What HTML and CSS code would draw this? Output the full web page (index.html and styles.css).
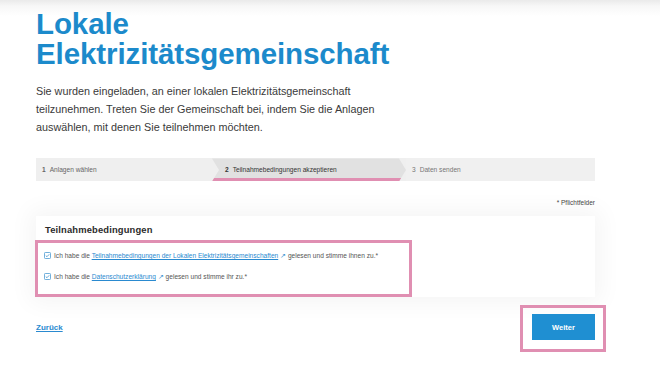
FILE: index.html
```html
<!DOCTYPE html>
<html lang="de">
<head>
<meta charset="utf-8">
<title>Lokale Elektrizitätsgemeinschaft</title>
<link rel="stylesheet" href="styles.css">
</head>
<body>
<main class="page">
  <h1 class="title">Lokale<br>Elektrizitätsgemeinschaft</h1>
  <p class="intro">Sie wurden eingeladen, an einer lokalen Elektrizitätsgemeinschaft<br>teilzunehmen. Treten Sie der Gemeinschaft bei, indem Sie die Anlagen<br>auswählen, mit denen Sie teilnehmen möchten.</p>

  <ol class="steps">
    <li class="step step-done"><span class="num">1</span>Anlagen wählen</li>
    <li class="step step-active"><span class="num">2</span>Teilnahmebedingungen akzeptieren</li>
    <li class="step step-next"><span class="num">3</span>Daten senden</li>
  </ol>

  <p class="required">* Pflichtfelder</p>

  <section class="card">
    <h2 class="card-title">Teilnahmebedingungen</h2>
    <div class="checks">
      <label class="check">
        <span class="box"><svg viewBox="0 0 8 8" width="7" height="7"><rect x="0.5" y="0.5" width="7" height="7" rx="1.2" fill="#fff" stroke="#3d93cf" stroke-width="0.9"/><path d="M2 4.1 L3.4 5.4 L6 2.6" fill="none" stroke="#3d93cf" stroke-width="0.9"/></svg></span>
        <span>Ich habe die <a href="#" class="link">Teilnahmebedingungen der Lokalen Elektrizitätsgemeinschaften</a> <span class="ext">↗</span> gelesen und stimme ihnen zu.*</span>
      </label>
      <label class="check">
        <span class="box"><svg viewBox="0 0 8 8" width="7" height="7"><rect x="0.5" y="0.5" width="7" height="7" rx="1.2" fill="#fff" stroke="#3d93cf" stroke-width="0.9"/><path d="M2 4.1 L3.4 5.4 L6 2.6" fill="none" stroke="#3d93cf" stroke-width="0.9"/></svg></span>
        <span>Ich habe die <a href="#" class="link">Datenschutzerklärung</a> <span class="ext">↗</span> gelesen und stimme ihr zu.*</span>
      </label>
    </div>
  </section>

  <div class="actions">
    <a href="#" class="back">Zurück</a>
    <button class="next" type="button">Weiter</button>
  </div>
</main>
</body>
</html>
```

FILE: styles.css
```css
* { box-sizing: border-box; }

html, body { margin: 0; padding: 0; }

body {
  background: linear-gradient(#eaeaea 0, #f7f7f7 6px, #ffffff 16px) no-repeat, #ffffff;
  font-family: "Liberation Sans", Arial, sans-serif;
  color: #333;
  width: 660px;
  height: 371px;
  overflow: hidden;
}

.page {
  width: 559px;
  margin-left: 36px;
  padding-top: 9px;
}

.title {
  margin: 0;
  font-size: 29.5px;
  line-height: 29.5px;
  font-weight: bold;
  color: #1c8acb;
  letter-spacing: -0.1px;
}

.intro {
  margin: 15px 0 0;
  font-size: 10.8px;
  line-height: 17.8px;
  color: #3a3a3a;
}

.steps {
  list-style: none;
  margin: 22px 0 0;
  padding: 0;
  display: flex;
  height: 23px;
  background: #efefef;
  font-size: 6.6px;
  color: #666;
}

.step {
  display: flex;
  align-items: center;
  height: 100%;
}

.num { margin-right: 4px; font-weight: bold; }

.step-done {
  width: 176px;
  padding-left: 6px;
}

.step-active {
  width: 194px;
  padding-left: 13px;
  background: #e1e1e1;
  color: #333;
  border-bottom: 3px solid #e08fb2;
  padding-top: 3px;
  clip-path: polygon(0 0, calc(100% - 7px) 0, 100% 50%, calc(100% - 7px) 100%, 0 100%, 7px 50%);
}

.step-next {
  flex: 1;
  padding-left: 6px;
  background: #f0f0f0;
  color: #777;
}
.step-next .num { font-weight: normal; }

.required {
  margin: 18px 0 0;
  text-align: right;
  font-size: 6.5px;
  line-height: 8px;
  color: #444;
}

.card {
  margin-top: 9px;
  background: #fff;
  box-shadow: 0 0 22px 6px rgba(0, 0, 0, 0.045);
  height: 81px;
  display: flex;
  flex-direction: column;
}

.card-title {
  margin: 0;
  padding: 9px 0 0 9px;
  height: 24px;
  font-size: 9.4px;
  line-height: 10px;
  font-weight: bold;
  color: #2b2b2b;
  letter-spacing: 0.15px;
}

.checks {
  width: 377px;
  flex: 1;
  margin-left: -1px;
  border: 3px solid #e08fb2;
  padding: 8px 0 0 6px;
  display: flex;
  flex-direction: column;
  gap: 12px;
}

.check {
  display: flex;
  align-items: center;
  gap: 3px;
  font-size: 6.6px;
  line-height: 9px;
  color: #555;
}

.box { display: flex; }

.link {
  color: #2a8ad0;
  text-decoration: underline;
}

.ext { color: #3d93cf; }

.actions {
  margin-top: 17px;
  display: flex;
  justify-content: space-between;
  align-items: center;
}

.back {
  font-size: 8px;
  font-weight: bold;
  color: #2a8ad0;
  text-decoration: underline;
}

.next {
  position: relative;
  width: 63px;
  height: 26px;
  border: 0;
  background: #1f8fd2;
  color: #fff;
  font-family: inherit;
  font-size: 7.5px;
  font-weight: bold;
  padding: 0;
}

.next::after {
  content: "";
  position: absolute;
  top: -9px;
  right: -11px;
  bottom: -12px;
  left: -12px;
  border: 3px solid #e08fb2;
}
```
